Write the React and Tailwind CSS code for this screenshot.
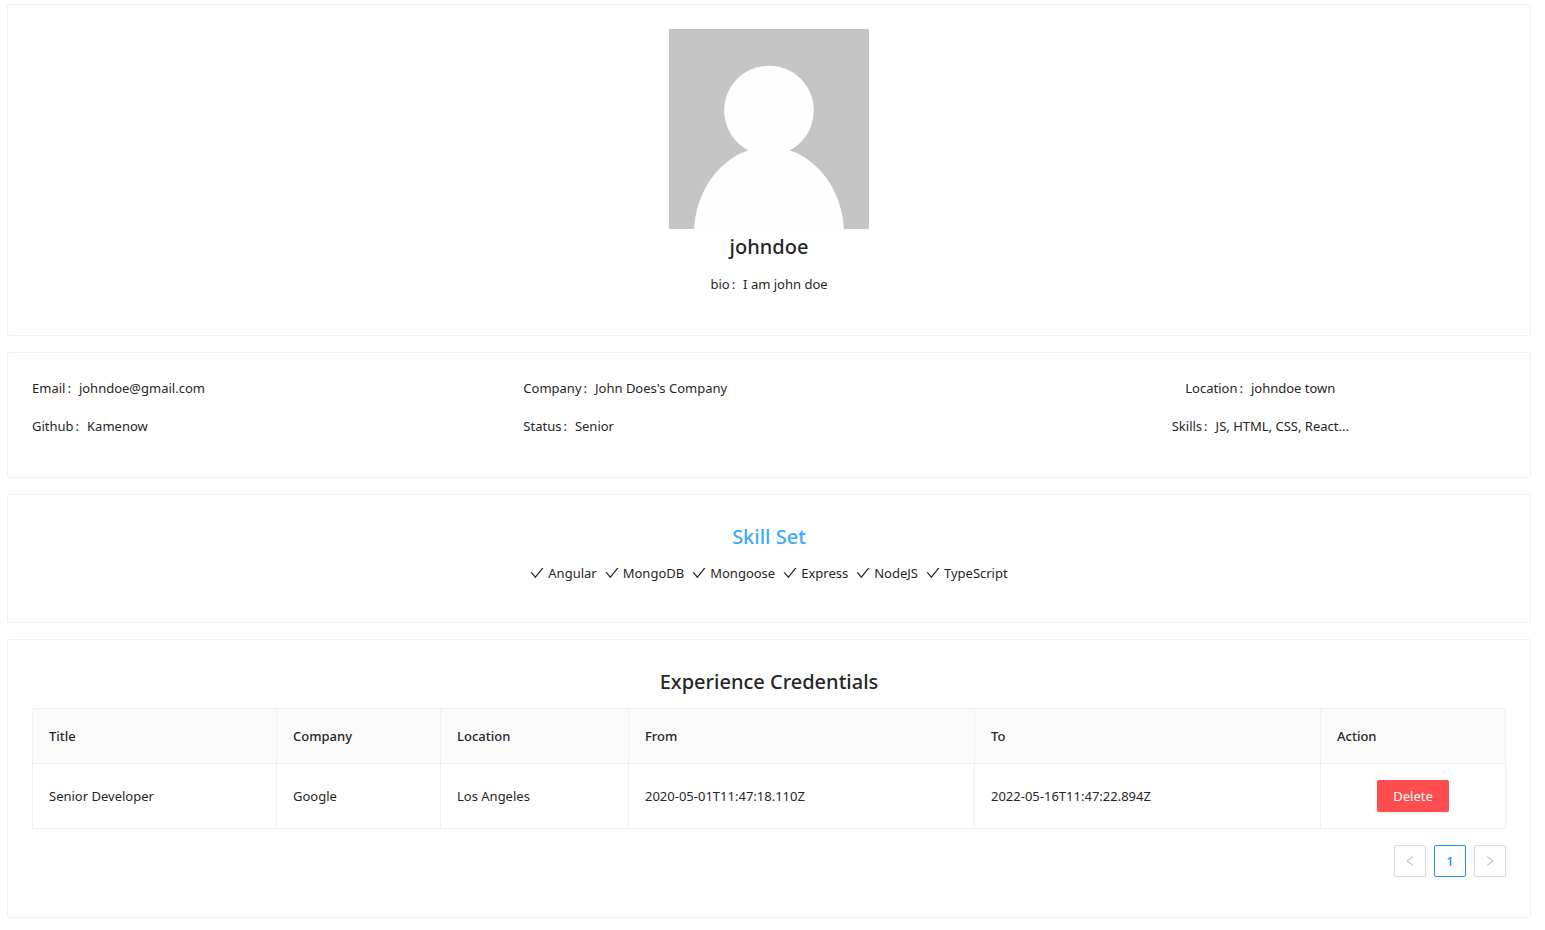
const SKILLS = ['Angular', 'MongoDB', 'Mongoose', 'Express', 'NodeJS', 'TypeScript'];

const DETAILS = [
  ['Email', 'johndoe@gmail.com'],
  ['Company', "John Does's Company"],
  ['Location', 'johndoe town'],
  ['Github', 'Kamenow'],
  ['Status', 'Senior'],
  ['Skills', 'JS, HTML, CSS, React...'],
];

const COLUMNS = [
  ['Title', 'w-[244px]'],
  ['Company', 'w-[164px]'],
  ['Location', 'w-[188px]'],
  ['From', 'w-[346px]'],
  ['To', 'w-[346px]'],
  ['Action', 'w-[185px]'],
];

const EXPERIENCES = [
  ['Senior Developer', 'Google', 'Los Angeles', '2020-05-01T11:47:18.110Z', '2022-05-16T11:47:22.894Z'],
];

const CHECK =
  'M912 190h-69.9c-9.8 0-19.1 4.5-25.1 12.2L404.7 724.5 207 474a32 32 0 0 0-25.1-12.2H112c-6.7 0-10.4 7.7-6.3 12.9l273.9 347c12.8 16.2 37.4 16.2 50.3 0l488.4-618.9c4.1-5.1.4-12.8-6.3-12.8z';
const LEFT =
  'M724 218.3V141c0-6.7-7.7-10.4-12.9-6.3L260.3 486.8a31.86 31.86 0 0 0 0 50.3l450.8 352.1c5.3 4.1 12.9.4 12.9-6.3v-77.3c0-4.9-2.3-9.6-6.1-12.6l-360-281 360-281.1c3.8-3 6.1-7.7 6.1-12.6z';
const RIGHT =
  'M765.7 486.8L314.9 134.7A7.97 7.97 0 0 0 302 141v77.3c0 4.9 2.3 9.6 6.1 12.6l360 281.1-360 281.1c-3.9 3-6.1 7.7-6.1 12.6V883c0 6.7 7.7 10.4 12.9 6.3l450.8-352.1a31.96 31.96 0 0 0 0-50.4z';

function Icon({ path, className }) {
  return (
    <svg viewBox="64 64 896 896" fill="currentColor" aria-hidden="true" className={className}>
      <path d={path} />
    </svg>
  );
}

function Card({ children }) {
  return <section className="rounded-xs border border-[#f0f0f0] bg-white p-6">{children}</section>;
}

function Heading({ children, className = 'mb-2 text-[#262626]' }) {
  return <h2 className={`text-center text-[20px] leading-9 font-medium ${className}`}>{children}</h2>;
}

function Detail({ label, value, className = '' }) {
  return (
    <div className={`flex pb-4 ${className}`}>
      <dt>
        {label}
        <span className="mr-2 ml-0.5">:</span>
      </dt>
      <dd>{value}</dd>
    </div>
  );
}

function Avatar() {
  return (
    <svg viewBox="0 0 200 200" className="mx-auto block size-[200px]" role="img" aria-label="johndoe">
      <rect width="200" height="200" fill="#c5c5c5" />
      <circle cx="100" cy="81.5" r="44.8" fill="#fefefe" />
      <ellipse cx="100" cy="205" rx="75" ry="87" fill="#fefefe" />
    </svg>
  );
}

export default function App() {
  return (
    <main className="flex flex-col gap-4 bg-white pt-1 pr-3.5 pb-3 pl-[7px] font-['Noto_Sans','Open_Sans',sans-serif] text-[13px] leading-[22px] text-[#262626]">
      <Card>
        <Avatar />
        <Heading>johndoe</Heading>
        <dl>
          <Detail label="bio" value="I am john doe" className="justify-center" />
        </dl>
      </Card>

      <Card>
        <dl className="grid grid-cols-3">
          {DETAILS.map(([label, value], i) => (
            <Detail key={label} label={label} value={value} className={i % 3 === 2 ? 'justify-center' : ''} />
          ))}
        </dl>
      </Card>

      <Card>
        <Heading className="mb-[7px] text-[#40a9ff]">Skill Set</Heading>
        <ul className="flex flex-wrap justify-center gap-x-2 pb-3.5">
          {SKILLS.map((skill) => (
            <li key={skill} className="flex items-center gap-1">
              <Icon path={CHECK} className="size-3.5" />
              {skill}
            </li>
          ))}
        </ul>
      </Card>

      <Card>
        <Heading>Experience Credentials</Heading>
        <table className="w-full table-fixed border-separate border-spacing-0 rounded-t-xs border-t border-l border-[#f0f0f0] text-left">
          <thead>
            <tr>
              {COLUMNS.map(([name, width]) => (
                <th
                  key={name}
                  scope="col"
                  className={`border-r border-b border-[#f0f0f0] bg-[#fafafa] p-4 font-medium ${width}`}
                >
                  {name}
                </th>
              ))}
            </tr>
          </thead>
          <tbody>
            {EXPERIENCES.map((row) => (
              <tr key={row[3]}>
                {row.map((cell) => (
                  <td key={cell} className="border-r border-b border-[#f0f0f0] p-4">
                    {cell}
                  </td>
                ))}
                <td className="border-r border-b border-[#f0f0f0] p-4 text-center">
                  <button
                    type="button"
                    className="mx-auto block h-8 rounded-xs bg-[#ff4d4f] px-4 text-white shadow-[0_2px_0_rgba(0,0,0,0.045)]"
                  >
                    Delete
                  </button>
                </td>
              </tr>
            ))}
          </tbody>
        </table>
        <nav aria-label="Pagination" className="flex justify-end gap-2 py-4">
          <button
            type="button"
            disabled
            aria-label="Previous page"
            className="flex size-8 items-center justify-center rounded-xs border border-[#d9d9d9] text-[#bfbfbf]"
          >
            <Icon path={LEFT} className="size-3" />
          </button>
          <button
            type="button"
            aria-current="page"
            className="size-8 rounded-xs border border-[#1890ff] font-medium text-[#1890ff]"
          >
            1
          </button>
          <button
            type="button"
            disabled
            aria-label="Next page"
            className="flex size-8 items-center justify-center rounded-xs border border-[#d9d9d9] text-[#bfbfbf]"
          >
            <Icon path={RIGHT} className="size-3" />
          </button>
        </nav>
      </Card>
    </main>
  );
}
